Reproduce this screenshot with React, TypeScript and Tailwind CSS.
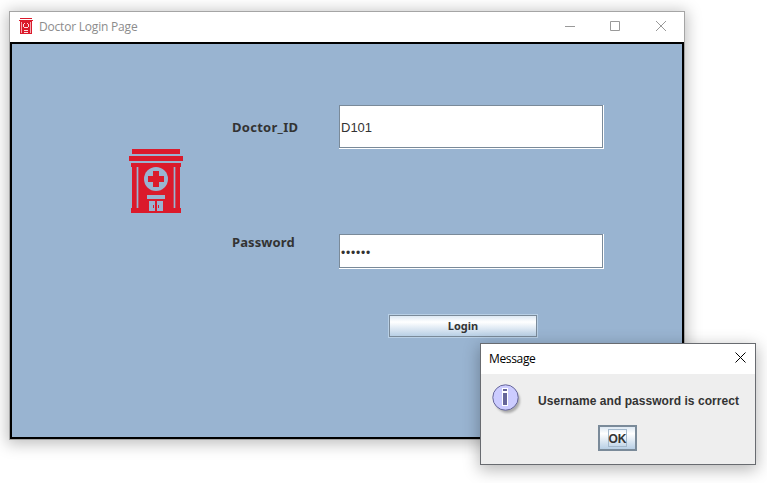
import React from "react";

function Hospital({ className }: { className: string }) {
  return (
    <svg className={className} viewBox="0 0 54 64" fill="#db1a2b">
      <path d="M3 0h48v5H3zM0 7h54v5H0zM2 14h7v4H8v41h1v5H2v-5h1V18H2zM45 14h7v4h-1v41h1v5h-7v-5h1V18h-1zM9 14h36v4h1v41h-1v5H9v-5H8V18h1z" />
      <path d="M8.5 18v41M45.5 18v41" stroke="#99b4d1" strokeWidth="1.7" />
      <circle cx="27" cy="30" r="12" fill="#99b4d1" />
      <path d="M24 22h6v5h5v6h-5v5h-6v-5h-5v-6h5z" />
      <path d="M18 46h18v4H18zM20 52h6v10h-6zM28 52h6v10h-6z" fill="#99b4d1" />
      <path d="M24 56h1v3h-1zM29 56h1v3h-1z" />
    </svg>
  );
}

function HospitalSmall() {
  return (
    <svg className="-mt-0.5 h-4 w-[14px]" viewBox="0 0 14 16" shapeRendering="crispEdges" fill="#db1a2b">
      <path d="M1 0h12v1H1zM0 2h14v1H0zM1 3h12v13H1z" />
      <path d="M2 4h1v11H2zM11 4h1v11h-1z" fill="#f4a9b0" />
      <path d="M5 5h1v1H5zM8 5h1v1H8zM4 6h1v3H4zM9 6h1v3H9zM5 9h4v1H5zM5 12h4v1H5zM5 14h4v1H5z" fill="#fbdde0" />
    </svg>
  );
}

function Field({ value, className }: { value: string; className: string }) {
  return (
    <div className={`ml-px w-[265px] border-r border-b border-white ${className}`}>
      <div className="flex h-full items-center border border-[#7a8a99] bg-white pt-[3px] pl-px">
        <span className="whitespace-pre">{value}</span>
      </div>
    </div>
  );
}

function InfoIcon() {
  return (
    <svg className="h-8 w-8 shrink-0" viewBox="0 0 32 32">
      <defs>
        <filter id="infoShadow" x="-20%" y="-20%" width="150%" height="150%">
          <feGaussianBlur stdDeviation="1.3" />
        </filter>
      </defs>
      <circle cx="15.5" cy="16.5" r="12.5" fill="#aaa" filter="url(#infoShadow)" />
      <circle cx="13.5" cy="13.5" r="12.7" fill="#ccccff" stroke="#666699" />
      <path d="M10 4h6v18h-6z" fill="#fff" />
      <path d="M11 5h4v2h-4zM11 9h4v12h-4z" fill="#666699" />
    </svg>
  );
}

export default function App() {
  return (
    <div className="relative h-[483px] w-[767px] overflow-hidden bg-white pt-[11px] pl-[9px] font-['Liberation_Sans',sans-serif] text-[#333]">
      <main className="flex h-[429px] w-[676px] flex-col border border-[#a5a5a5] bg-white shadow-[0_2px_14px_2px_rgba(0,0,0,0.25)]">
        <header className="flex h-[30px] shrink-0 items-center pl-[9px] text-[#8c8c8c]">
          <HospitalSmall />
          <h1 className="ml-[6px] grow font-['Open_Sans',sans-serif] text-[12px] tracking-[-0.2px]">Doctor Login Page</h1>
          <svg className="-mt-px mr-[16px] h-[11px] w-[103px]" viewBox="0 0 103 11" fill="none" stroke="#999">
            <path d="M0 5.5h10M45.5.5h9v9h-9z" />
            <path d="M91 0l10 10M101 0L91 10" />
          </svg>
        </header>
        <section className="flex grow border-2 border-black bg-[#99b4d1]">
          <div className="w-[220px] shrink-0 pt-[105px] pl-[117px]">
            <Hospital className="h-[64px] w-[54px]" />
          </div>
          <div className="w-[106px] shrink-0 pt-[74px] font-['Noto_Sans',sans-serif] text-[13px] leading-[18px] font-bold">
            <p className="tracking-[0.28px]">Doctor_ID</p>
            <p className="mt-[97px] tracking-[0.1px]">Password</p>
          </div>
          <div className="pt-[61px]">
            <Field className="h-[44px] text-[13px]" value="D101" />
            <Field className="mt-[85px] h-[35px] text-[12px] tracking-[0.8px]" value="••••••" />
            <button className="mt-[45px] ml-[50px] block h-6 w-[150px] border border-[#b8cfe5] p-0 font-['Noto_Sans',sans-serif] text-[11px] font-bold">
              <span className="flex h-full items-center justify-center border border-[#7a8a99] bg-linear-to-b from-[#dde8f3] via-white via-30% to-[#b8cfe5]">Login</span>
            </button>
          </div>
        </section>
      </main>
      <div role="dialog" className="absolute top-[343px] left-[480px] flex h-[122px] w-[276px] flex-col border border-[#686b70] bg-[#eee] shadow-[0_4px_15px_1px_rgba(0,0,0,0.28)]">
        <header className="flex h-[30px] items-center justify-between bg-white pr-[9px] pl-2 text-black">
          <h2 className="font-['Open_Sans',sans-serif] text-[12px] tracking-[-0.35px]">Message</h2>
          <svg className="-mt-1 h-[11px] w-[11px]" viewBox="0 0 11 11" stroke="black">
            <path d="M.5.5l10 10M10.5.5l-10 10" />
          </svg>
        </header>
        <div className="flex h-[51px] pt-[10px] pl-[11px]">
          <InfoIcon />
          <p className="mt-[9px] ml-[14px] text-[12px] leading-4 font-bold tracking-[0.05px] whitespace-nowrap">Username and password is correct</p>
        </div>
        <button className="ml-[117px] flex h-[26px] w-[39px] items-center justify-center border-2 border-[#7a8a99] bg-linear-to-b from-[#dde8f3] via-white via-30% to-[#b8cfe5] p-0 text-[12px] font-bold">
          <span className="flex h-[18px] w-[19px] items-center justify-center border border-[#a3b8cc] pt-px">OK</span>
        </button>
      </div>
    </div>
  );
}
